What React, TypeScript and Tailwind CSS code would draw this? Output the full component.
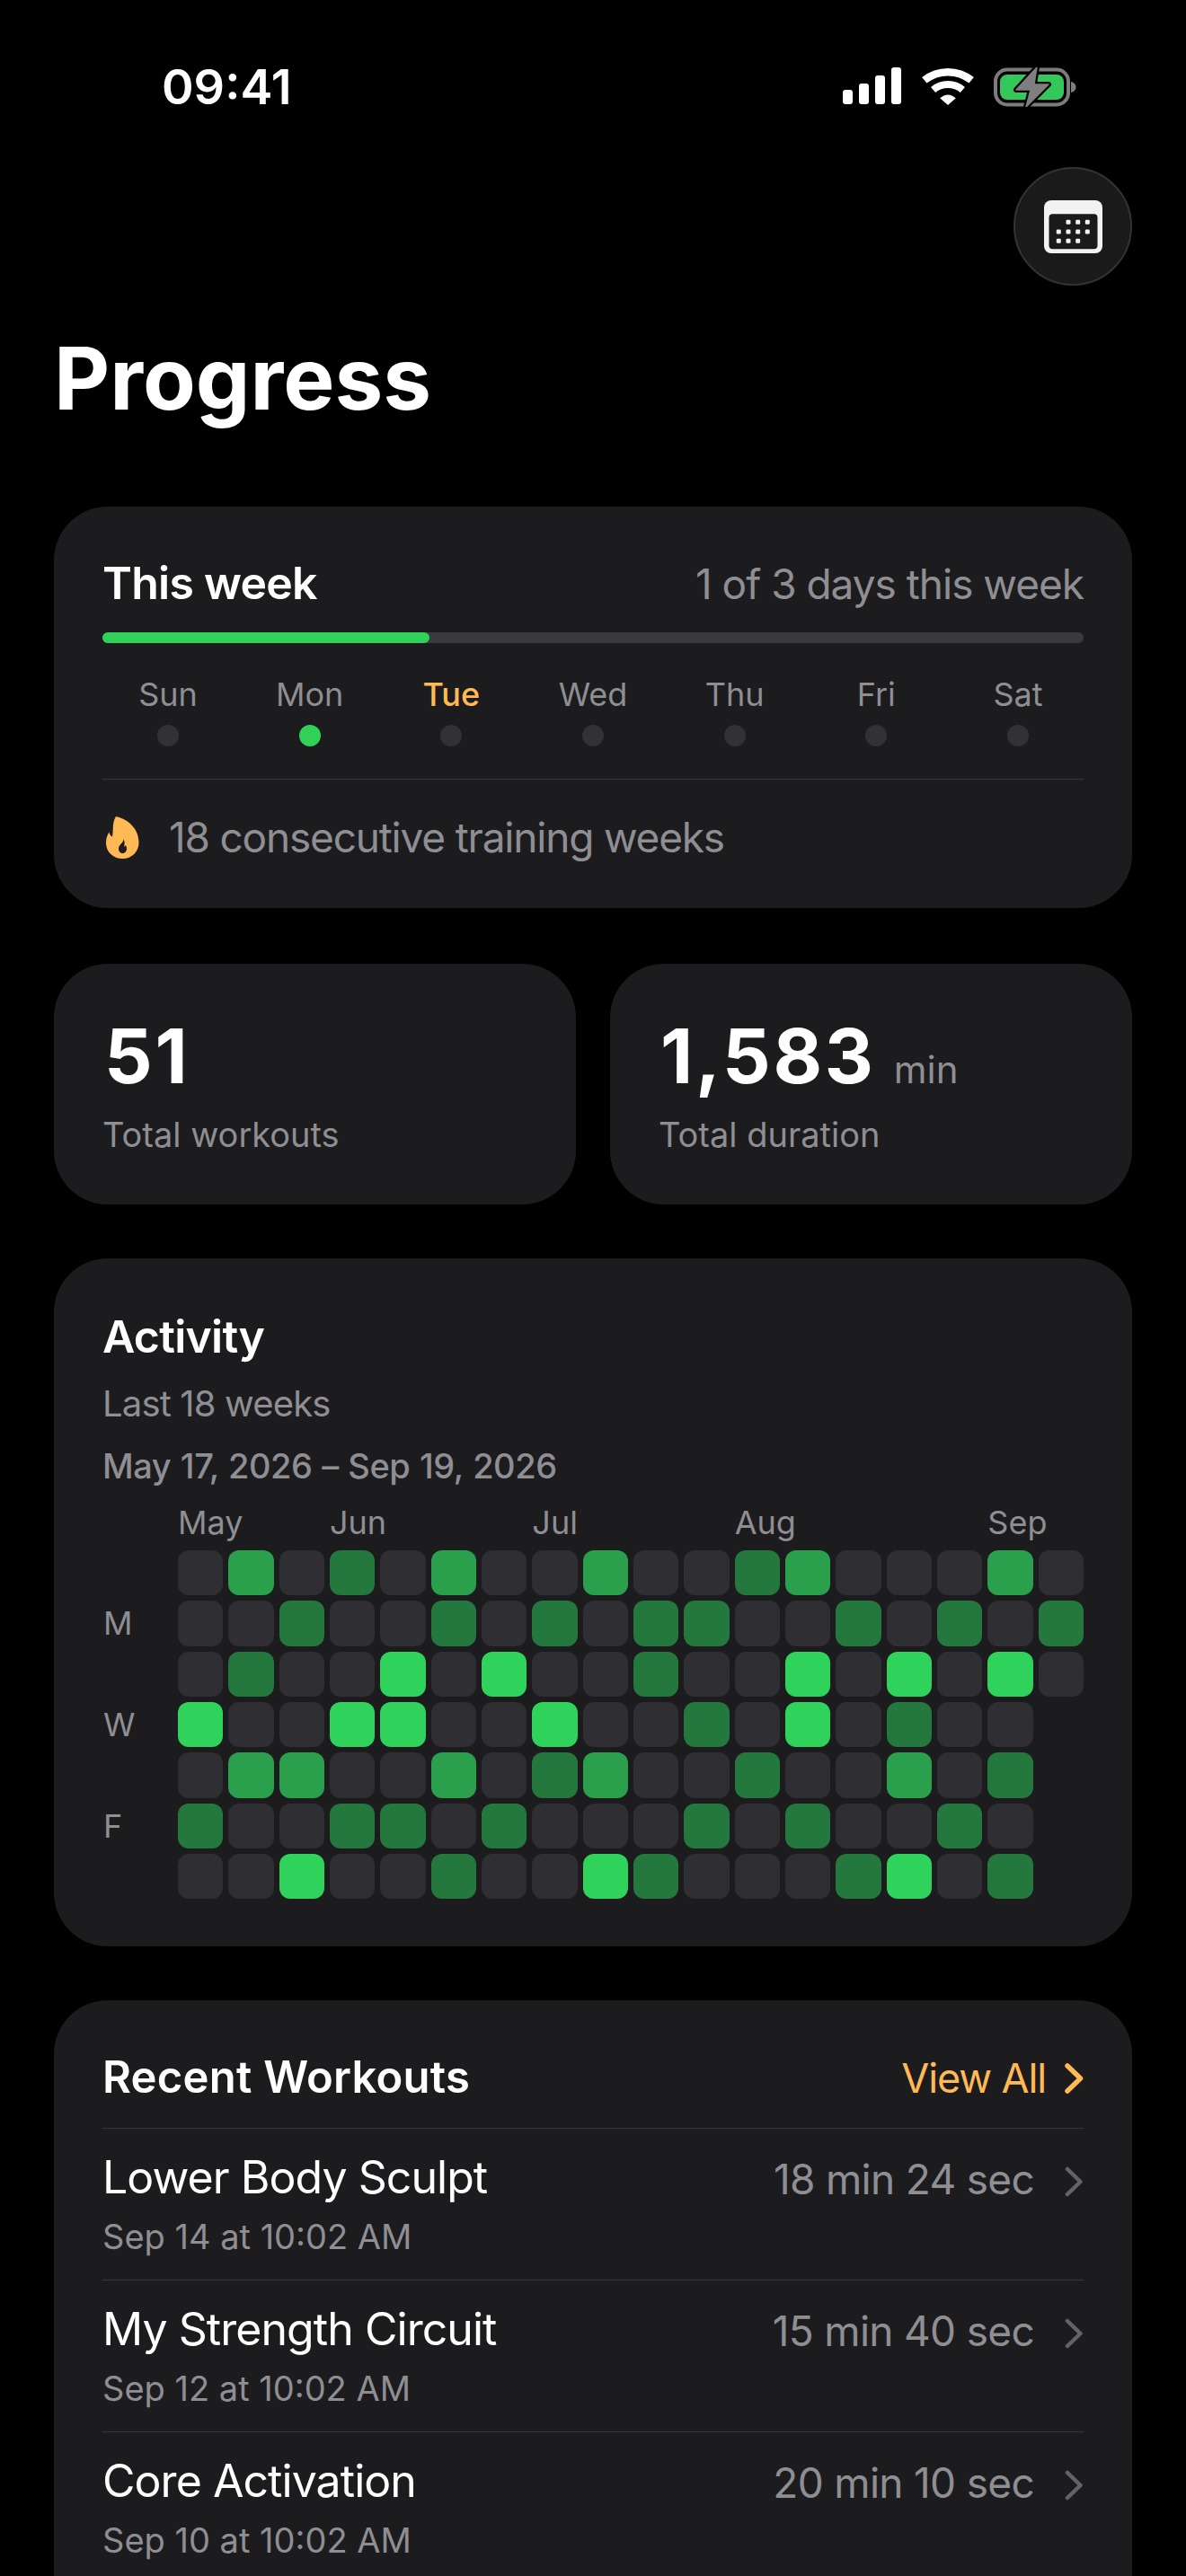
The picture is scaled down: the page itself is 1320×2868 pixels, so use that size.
const DAYS = ["Sun", "Mon", "Tue", "Wed", "Thu", "Fri", "Sat"];

// 0 empty, 1 dark, 2 mid, 3 bright; -1 is a day that has not happened yet
const HEATMAP = [
  [0, 2, 0, 1, 0, 2, 0, 0, 2, 0, 0, 1, 2, 0, 0, 0, 2, 0],
  [0, 0, 1, 0, 0, 1, 0, 1, 0, 1, 1, 0, 0, 1, 0, 1, 0, 1],
  [0, 1, 0, 0, 3, 0, 3, 0, 0, 1, 0, 0, 3, 0, 3, 0, 3, 0],
  [3, 0, 0, 3, 3, 0, 0, 3, 0, 0, 1, 0, 3, 0, 1, 0, 0, -1],
  [0, 2, 2, 0, 0, 2, 0, 1, 2, 0, 0, 1, 0, 0, 2, 0, 1, -1],
  [1, 0, 0, 1, 1, 0, 1, 0, 0, 0, 1, 0, 1, 0, 0, 1, 0, -1],
  [0, 0, 3, 0, 0, 1, 0, 0, 3, 1, 0, 0, 0, 1, 3, 0, 1, -1],
];

const LEVELS: Record<number, string> = {
  [-1]: "bg-transparent",
  0: "bg-[#2f2f33]",
  1: "bg-[#24773d]",
  2: "bg-[#2aa04d]",
  3: "bg-[#2fd35b]",
};

const WORKOUTS = [
  { name: "Lower Body Sculpt", date: "Sep 14 at 10:02 AM", time: "18 min 24 sec" },
  { name: "My Strength Circuit", date: "Sep 12 at 10:02 AM", time: "15 min 40 sec" },
  { name: "Core Activation", date: "Sep 10 at 10:02 AM", time: "20 min 10 sec" },
];

function Signal() {
  return (
    <svg width="66" height="41" viewBox="0 0 66 41" fill="#fff">
      <rect x="0" y="25" width="11" height="16" rx="3" />
      <rect x="18" y="18" width="11" height="23" rx="3" />
      <rect x="36" y="9" width="11" height="32" rx="3" />
      <rect x="54" y="0" width="11" height="41" rx="3" />
    </svg>
  );
}

function Wifi() {
  return (
    <svg width="58" height="42" viewBox="0 0 58 42" fill="none">
      <path d="M2.8 14.3A42 42 0 0 1 55.2 14.3" stroke="#fff" strokeWidth="8.5" />
      <path d="M12.6 25A25.4 25.4 0 0 1 45.4 25" stroke="#fff" strokeWidth="8" />
      <path d="M29 42 20.2 34.3Q29 26.5 37.8 34.3Z" fill="#fff" />
    </svg>
  );
}

function Battery() {
  return (
    <svg width="92" height="44" viewBox="0 0 92 44" fill="none">
      <rect x="2" y="2.500" width="81" height="39" rx="13" stroke="#7c7c7c" strokeWidth="4" />
      <rect x="7" y="8" width="71" height="28" rx="8" fill="#34c759" />
      <path d="M86 16c3 .6 5.500 2.600 5.500 6s-2.500 5.400-5.500 6Z" fill="#7c7c7c" />
      <path d="M48 0 25 25H41L36 44 61 19H45Z" fill="#000" stroke="#000" strokeWidth="6" strokeLinejoin="round" />
      <path d="M48 0 25 25H41L36 44 61 19H45Z" fill="#7f7f7f" stroke="#7f7f7f" strokeWidth="1.500" strokeLinejoin="round" />
    </svg>
  );
}

function CalendarIcon() {
  const dots = [
    [27, 24.3], [37.7, 24.3], [48.3, 24.3],
    [16.3, 35], [27, 35], [37.7, 35], [48.3, 35],
    [16.3, 45.3], [27, 45.3], [37.7, 45.3],
  ];
  return (
    <svg width="65" height="59" viewBox="0 0 65 59">
      <rect x="0" y="0" width="65" height="59" rx="8" fill="#f2f2f2" />
      <rect x="5.500" y="15.300" width="54" height="39" rx="4" fill="#1a1a1a" />
      {dots.map(([x, y]) => (
        <rect key={`${x}-${y}`} x={x - 2.5} y={y - 2.5} width="5" height="5" rx="1.2" fill="#f2f2f2" />
      ))}
    </svg>
  );
}

function Flame() {
  return (
    <svg width="37" height="47" viewBox="0 0 37 47" className="shrink-0">
      <path
        fillRule="evenodd"
        fill="#ffb955"
        d="M11 0C21 2 36.500 11 36.500 29 36.500 39.500 28.500 47 18.500 47 8 47 0 39.500 0 29.500 0 25 1 21 3.500 17.500 4 20 5 21.500 7 22.500 8.500 15 6.500 7 11 0ZM19.500 25C20 29 14 31 14 36 14 38.800 16 41 18.500 41 21 41 23 38.800 23 36 23 34.300 22.500 33 21.700 32 21.300 33 20.800 33.500 20 33.800 20.800 31 21 28 19.500 25Z"
      />
    </svg>
  );
}

function Chevron({ color, weight }: { color: string; weight: number }) {
  return (
    <svg width="22" height="34" viewBox="0 0 22 34" fill="none" className="shrink-0">
      <path d="M4 3 18.500 17 4 31" stroke={color} strokeWidth={weight} strokeLinecap="round" strokeLinejoin="round" />
    </svg>
  );
}

function ThisWeekCard() {
  return (
    <section className="h-[447px] rounded-[60px] bg-[#1c1c1e] px-[54px] pt-[55px]">
      <div className="flex items-baseline justify-between">
        <h2 className="text-[50px] leading-[60px] font-semibold tracking-[-0.015em] text-white">This week</h2>
        <span className="text-[46px] leading-[60px] tracking-[-0.022em] text-[#8e8e93]">1 of 3 days this week</span>
      </div>
      <div className="mt-[24px] h-[12px] rounded-full bg-[#3a3a3c]">
        <div className="h-full w-1/3 rounded-full bg-[#30d158]" />
      </div>
      <div className="mt-[35px] flex justify-between px-[33px]">
        {DAYS.map((day) => (
          <div key={day} className="flex w-[80px] flex-col items-center">
            <span className={`text-[36px] leading-[44px] ${day === "Tue" ? "font-medium text-[#ffb955]" : "text-[#8e8e93]"}`}>
              {day}
            </span>
            <span className={`mt-[12px] h-[24px] w-[24px] rounded-full ${day === "Mon" ? "bg-[#30d158]" : "bg-[#323236]"}`} />
          </div>
        ))}
      </div>
      <div className="mt-[36px] h-px bg-[#38383a]" />
      <div className="mt-[36px] flex items-center gap-[33px] pl-[4px]">
        <Flame />
        <span className="text-[46px] leading-[56px] tracking-[-0.026em] text-[#8e8e93]">18 consecutive training weeks</span>
      </div>
    </section>
  );
}

function StatCard({ value, unit, label }: { value: string; unit?: string; label: string }) {
  return (
    <div className="h-[268px] flex-1 rounded-[60px] bg-[#1c1c1e] px-[54px] pt-[53px]">
      <div className="flex items-baseline gap-[20px] pl-[2px]">
        <span className="text-[84px] leading-[100px] font-bold tracking-[0.032em] text-white">{value}</span>
        {unit && <span className="text-[42px] text-[#8e8e93]">{unit}</span>}
      </div>
      <div className="mt-[14px] text-[38px] leading-[46px] text-[#8e8e93]">{label}</div>
    </div>
  );
}

function ActivityCard() {
  return (
    <section className="mt-[60px] h-[766px] rounded-[60px] bg-[#1c1c1e] px-[54px] pt-[57px]">
      <h2 className="text-[50px] leading-[60px] font-semibold tracking-[-0.015em] text-white">Activity</h2>
      <div className="mt-[21px] text-[40px] leading-[48px] tracking-[-0.021em] text-[#8e8e93]">Last 18 weeks</div>
      <div className="mt-[22px] text-[38px] leading-[46px] font-medium tracking-[-0.012em] text-[#8e8e93] [word-spacing:1px]">May 17, 2026 – Sep 19, 2026</div>

      <div className="mt-[18px] ml-[84px] grid grid-cols-[repeat(18,minmax(0,1fr))] gap-x-[6px] text-[36px] leading-[44px] text-[#8e8e93]">
        <span className="col-start-1 whitespace-nowrap">May</span>
        <span className="col-start-4 whitespace-nowrap">Jun</span>
        <span className="col-start-8 whitespace-nowrap">Jul</span>
        <span className="col-start-12 whitespace-nowrap">Aug</span>
        <span className="col-start-17 whitespace-nowrap">Sep</span>
      </div>

      <div className="mt-[9px] flex">
        <div className="flex w-[84px] shrink-0 flex-col justify-between text-[36px] text-[#8e8e93]">
          {["", "M", "", "W", "", "F", ""].map((label, i) => (
            <div key={i} className="flex h-[50px] items-center pl-[1px]">{label}</div>
          ))}
        </div>
        <div className="grid flex-1 grid-cols-[repeat(18,minmax(0,1fr))] gap-[6px]">
          {HEATMAP.flatMap((row, r) =>
            row.map((level, c) => (
              <div key={`${r}-${c}`} className={`aspect-square rounded-[12px] ${LEVELS[level]}`} />
            ))
          )}
        </div>
      </div>
    </section>
  );
}

function RecentWorkouts() {
  return (
    <section className="mt-[60px] rounded-t-[60px] bg-[#1c1c1e] px-[54px] pt-[56px]">
      <div className="flex items-baseline justify-between pb-[25px]">
        <h2 className="text-[49px] leading-[60px] font-semibold tracking-[0.005em] text-white">Recent Workouts</h2>
        <div className="flex items-center gap-[20px] text-[45px] leading-[60px] tracking-[-0.025em] text-[#ffb955]">
          View All
          <Chevron color="#ffb955" weight={5.5} />
        </div>
      </div>
      {WORKOUTS.map((w) => (
        <div key={w.name} className="border-t border-[#38383a] pt-[24px] pb-[25px]">
          <div className="flex items-start justify-between">
            <div>
              <div className="text-[50px] leading-[60px] tracking-[-0.019em] text-white">{w.name}</div>
              <div className="mt-[13px] text-[38px] leading-[46px] text-[#8e8e93]">{w.date}</div>
            </div>
            <div className="flex items-start gap-[33px] pt-[2px]">
              <span className="text-[46px] leading-[60px] tracking-[-0.015em] text-[#8e8e93]">{w.time}</span>
              <div className="pt-[16px]">
                <Chevron color="#636366" weight={4.5} />
              </div>
            </div>
          </div>
        </div>
      ))}
    </section>
  );
}

export default function App() {
  return (
    <div className="h-[2868px] w-[1320px] overflow-hidden bg-black font-['Inter',sans-serif] text-white">
      {/* Status bar */}
      <div className="flex h-[186px] items-start justify-between pt-[72px] pr-[122px] pl-[180px]">
        <span className="text-[54px] leading-[50px] font-semibold">09:41</span>
        <div className="flex items-start gap-[22px] pt-[3px]">
          <Signal />
          <Wifi />
          <Battery />
        </div>
      </div>

      <div className="flex justify-end px-[60px]">
        <button className="flex h-[132px] w-[132px] items-center justify-center rounded-full border-2 border-[#333335] bg-[#1a1a1a]">
          <CalendarIcon />
        </button>
      </div>

      <h1 className="mt-[45px] pl-[60px] text-[96px] leading-[116px] font-bold text-white">Progress</h1>

      <div className="mt-[85px] px-[60px]">
        <ThisWeekCard />
        <div className="mt-[62px] flex gap-[38px]">
          <StatCard value="51" label="Total workouts" />
          <StatCard value="1,583" unit="min" label="Total duration" />
        </div>
        <ActivityCard />
        <RecentWorkouts />
      </div>
    </div>
  );
}
